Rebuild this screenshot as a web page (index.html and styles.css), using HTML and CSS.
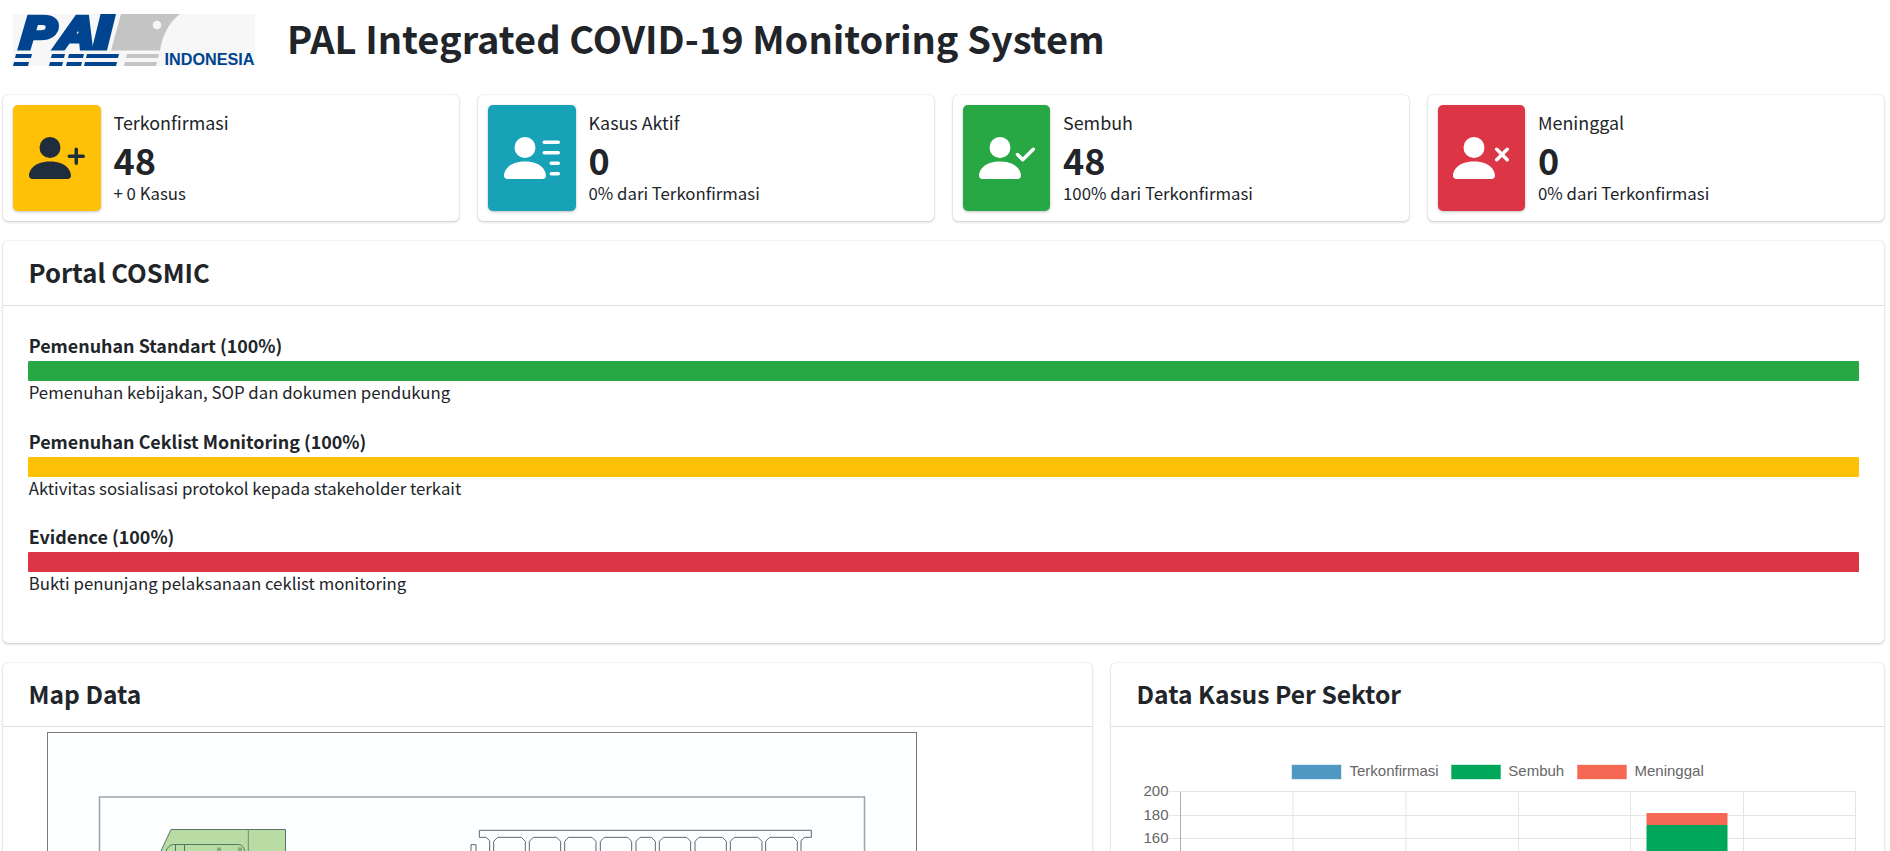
FILE: index.html
```html
<!DOCTYPE html>
<html lang="id">
<head>
<meta charset="utf-8">
<title>PAL Integrated COVID-19 Monitoring System</title>
<link rel="stylesheet" href="styles.css">
</head>
<body>
<header class="topbar">
  <svg class="logo" viewBox="0 0 242 52" width="242" height="52">
    <rect width="242" height="52" fill="#f7f7f7"/>
    <g class="mark">
      <text transform="translate(6.500 34.500) skewX(-4)" textLength="35" lengthAdjust="spacingAndGlyphs">P</text>
      <text transform="translate(43 34.500) skewX(-4)" textLength="38" lengthAdjust="spacingAndGlyphs">A</text>
      <text class="tall" transform="translate(76 52) skewX(-3)">L</text>
    </g>
    <rect y="36.500" width="242" height="15.500" fill="#f7f7f7"/>
    <g fill="#00448f">
      <path d="M3 40h16l-1 4H2zM1 48h15l-1 4H0zM39 40h13l-1 4H38zM37 48h13l-1 4H36zM56 40h15l-1 4H55zM54 48h15l-1 4H53zM74 40h32l-1 4H73zM72 48h32l-1 4H71z"/>
    </g>
    <path fill="#c4c4c4" d="M108 0h59q-16 12-20 36.500H98zM114 40h32l-1 4h-32zM112 48h32l-1 4h-32z"/>
    <circle cx="144" cy="11" r="4.300" fill="#f7f7f7"/>
    <text class="country" x="151.500" y="51" textLength="90" lengthAdjust="spacingAndGlyphs">INDONESIA</text>
  </svg>
  <h1>PAL Integrated COVID-19 Monitoring System</h1>
</header>
<main>
  <section class="stats">
    <article class="card stat">
      <div class="tile yellow"><svg viewBox="0 0 16 16" width="56" height="56"><path d="M1 14s-1 0-1-1 1-4 6-4 6 3 6 4-1 1-1 1H1zm5-6a3 3 0 1 0 0-6 3 3 0 0 0 0 6z"/><path d="M13.500 5a.5.5 0 0 1 .5.5V7h1.500a.5.5 0 0 1 0 1H14v1.500a.5.5 0 0 1-1 0V8h-1.500a.5.5 0 0 1 0-1H13V5.500a.5.5 0 0 1 .5-.5z"/></svg></div>
      <div class="info"><span class="label">Terkonfirmasi</span><strong>48</strong><span class="note">+ 0 Kasus</span></div>
    </article>
    <article class="card stat">
      <div class="tile teal"><svg viewBox="0 0 16 16" width="56" height="56"><path d="M1 14s-1 0-1-1 1-4 6-4 6 3 6 4-1 1-1 1H1zm5-6a3 3 0 1 0 0-6 3 3 0 0 0 0 6z"/><path d="M11 3.500a.5.5 0 0 1 .5-.5h4a.5.5 0 0 1 0 1h-4a.5.5 0 0 1-.5-.5zm.5 2.500a.5.5 0 0 0 0 1h4a.5.5 0 0 0 0-1h-4zm2 3a.5.5 0 0 0 0 1h2a.5.5 0 0 0 0-1h-2zm0 3a.5.5 0 0 0 0 1h2a.5.5 0 0 0 0-1h-2z"/></svg></div>
      <div class="info"><span class="label">Kasus Aktif</span><strong>0</strong><span class="note">0% dari Terkonfirmasi</span></div>
    </article>
    <article class="card stat">
      <div class="tile slim green"><svg viewBox="0 0 16 16" width="56" height="56"><path d="M1 14s-1 0-1-1 1-4 6-4 6 3 6 4-1 1-1 1H1zm5-6a3 3 0 1 0 0-6 3 3 0 0 0 0 6z"/><path d="M15.854 5.146a.5.5 0 0 1 0 .708l-3 3a.5.5 0 0 1-.708 0l-1.500-1.500a.5.5 0 0 1 .708-.708L12.500 7.793l2.646-2.647a.5.5 0 0 1 .708 0z"/></svg></div>
      <div class="info"><span class="label">Sembuh</span><strong>48</strong><span class="note">100% dari Terkonfirmasi</span></div>
    </article>
    <article class="card stat">
      <div class="tile slim shifted red"><svg viewBox="0 0 16 16" width="56" height="56"><path d="M1 14s-1 0-1-1 1-4 6-4 6 3 6 4-1 1-1 1H1zm5-6a3 3 0 1 0 0-6 3 3 0 0 0 0 6z"/><path d="M12.146 5.146a.5.5 0 0 1 .708 0L14 6.293l1.146-1.147a.5.5 0 0 1 .708.708L14.707 7l1.147 1.146a.5.5 0 0 1-.708.708L14 7.707l-1.146 1.147a.5.5 0 0 1-.708-.708L13.293 7l-1.147-1.146a.5.5 0 0 1 0-.708z"/></svg></div>
      <div class="info"><span class="label">Meninggal</span><strong>0</strong><span class="note">0% dari Terkonfirmasi</span></div>
    </article>
  </section>

  <section class="card portal">
    <h2>Portal COSMIC</h2>
    <div class="goals">
      <div class="goal"><h3>Pemenuhan Standart (100%)</h3><div class="bar green"></div><p>Pemenuhan kebijakan, SOP dan dokumen pendukung</p></div>
      <div class="goal"><h3>Pemenuhan Ceklist Monitoring (100%)</h3><div class="bar yellow"></div><p>Aktivitas sosialisasi protokol kepada stakeholder terkait</p></div>
      <div class="goal"><h3>Evidence (100%)</h3><div class="bar red"></div><p>Bukti penunjang pelaksanaan ceklist monitoring</p></div>
    </div>
  </section>

  <section class="panels">
    <article class="card panel">
      <h2>Map Data</h2>
      <svg class="map" viewBox="3 727 1089 160" width="1089" height="160" fill="none">
        <rect x="47.500" y="732.500" width="869" height="300" fill="#fdfeff" stroke="#777c7c"/>
        <rect x="99.500" y="797" width="765" height="300" stroke="#9aa5a8" stroke-width="1.500"/>
        <path d="M160 853l11-23.500h114.500V890H160z" fill="#b9dca5" stroke="#5d7567"/>
        <path d="M248.300 829v60" stroke="#6d8b70"/>
        <path d="M165.500 852q3-7.500 8-7.500h65q5 0 6.500 7.500M175.500 844.500v9m9-9v9M218 847.500v6m2-6v6M239 847.500v6m2-6v6" stroke="#55775f"/>
        <g transform="translate(450 700) scale(.33333)" stroke="#5b686a" stroke-width="3">
          <path d="M63 460v-26h15v26M119 460v-38l-11-10H88v-21h996v21h-20l-11 10v38"/>
          <path d="M131 460v-36l12-12h71l12 12v36M238 460v-36l12-12h70l12 12v36M344 460v-36l12-12h70l12 12v36M451 460v-36l12-12h70l12 12v36M558 460v-36l12-12h34l12 12v36M628 460v-36l12-12h70l12 12v36M735 460v-36l12-12h70l12 12v36M841 460v-36l12-12h71l12 12v36M947 460v-36l12-12h71l12 12v36"/>
        </g>
      </svg>
    </article>
    <article class="card panel">
      <h2>Data Kasus Per Sektor</h2>
      <svg class="chart" viewBox="1111 727 773 160" width="773" height="160">
        <g stroke-opacity=".6" stroke="#fff">
          <rect x="1291.500" y="764.500" width="50" height="15" fill="#4f98c3"/>
          <rect x="1451" y="764.500" width="50" height="15" fill="#00a65a"/>
          <rect x="1577" y="764.500" width="50" height="15" fill="#f56954"/>
        </g>
        <text x="1349.500" y="776">Terkonfirmasi</text>
        <text x="1508.300" y="776">Sembuh</text>
        <text x="1634.500" y="776">Meninggal</text>
        <g text-anchor="end"><text x="1168.500" y="796">200</text><text x="1168.500" y="820">180</text><text x="1168.500" y="843">160</text></g>
        <path d="M1169 791.500h687M1169 815.500h687M1169 838.500h687M1293 791v96M1406 791v96M1518.500 791v96M1630.500 791v96M1743.500 791v96M1855.500 791v96" fill="none" stroke="#e5e5e5"/>
        <path d="M1180.500 792v95" stroke="#adadad"/>
        <rect x="1646.500" y="813" width="81" height="12" fill="#f56954"/>
        <rect x="1646.500" y="825" width="81" height="62" fill="#00a65a"/>
      </svg>
    </article>
  </section>
</main>
</body>
</html>
```
FILE: styles.css
```css
* { box-sizing: border-box; }
body {
  margin: 0;
  height: 851px;
  overflow: hidden;
  background: #fff;
  color: #212529;
  font-family: "Noto Sans CJK SC", "Noto Sans", sans-serif;
  font-size: 16.8px;
}
h1, h2, h3, p { margin: 0; white-space: nowrap; }
.topbar { height: 95px; padding: 14px 13px 0; display: flex; gap: 32px; }
.logo { display: block; flex: none; }
.mark { font: italic bold 46px "Liberation Sans", sans-serif; fill: #00448f; stroke: #00448f; stroke-width: 5; }
.mark .tall { font-size: 72px; }
.country { font: bold 16px "Liberation Sans", sans-serif; fill: #00448f; }
h1 { font-size: 38px; line-height: 48px; font-weight: 700; }
main { padding: 0 6px 0 3px; }
.card {
  background: #fff;
  border-radius: 5px;
  box-shadow: 0 0 1px rgba(0,0,0,.2), 0 1px 3px rgba(0,0,0,.2);
}
.stats { display: grid; grid-template-columns: repeat(4, 456px); gap: 19px; }
.stat { height: 126px; padding: 10px; display: flex; gap: 12.5px; }
.tile {
  width: 88px; height: 106px; border-radius: 5px;
  display: flex; align-items: center; justify-content: center;
  box-shadow: 0 1px 3px rgba(0,0,0,.25);
}
.tile.slim { width: 87px; margin-right: .5px; }
.tile.shifted { padding-right: 1px; }
.tile svg { fill: #fff; }
.tile.yellow svg { fill: #1f2d3d; }
.yellow { background: #ffc107; }
.teal { background: #17a2b8; }
.green { background: #28a745; }
.red { background: #dc3545; }
.info { display: flex; flex-direction: column; white-space: nowrap; }
.label { font-size: 17.9px; line-height: 26px; margin-top: 4px; }
.info strong { font-size: 36px; line-height: 40px; margin-top: 4px; }
.note { line-height: 24px; margin-top: 2px; }
.portal { margin-top: 20px; height: 402px; }
h2 { height: 65px; padding-left: 25.5px; border-bottom: 1px solid #dfdfdf; font-size: 25.6px; line-height: 62px; font-weight: 700; }
.goals { padding: 25px 25px 0; }
.goal { height: 95.5px; }
h3 { padding-left: .7px; font-size: 17.9px; line-height: 28px; height: 30px; font-weight: 700; }
.bar { height: 20px; border-radius: 1px; }
.goal p { padding-left: .7px; line-height: 22px; }
.panels { display: grid; grid-template-columns: 1089px 773px; gap: 19px; margin-top: 20px; }
.panel { height: 225px; overflow: hidden; }
.panel h2 { height: 64px; font-size: 24.6px; line-height: 60px; }
.map, .chart { display: block; }
.chart { font: 15px "Liberation Sans", sans-serif; fill: #666; }
```
